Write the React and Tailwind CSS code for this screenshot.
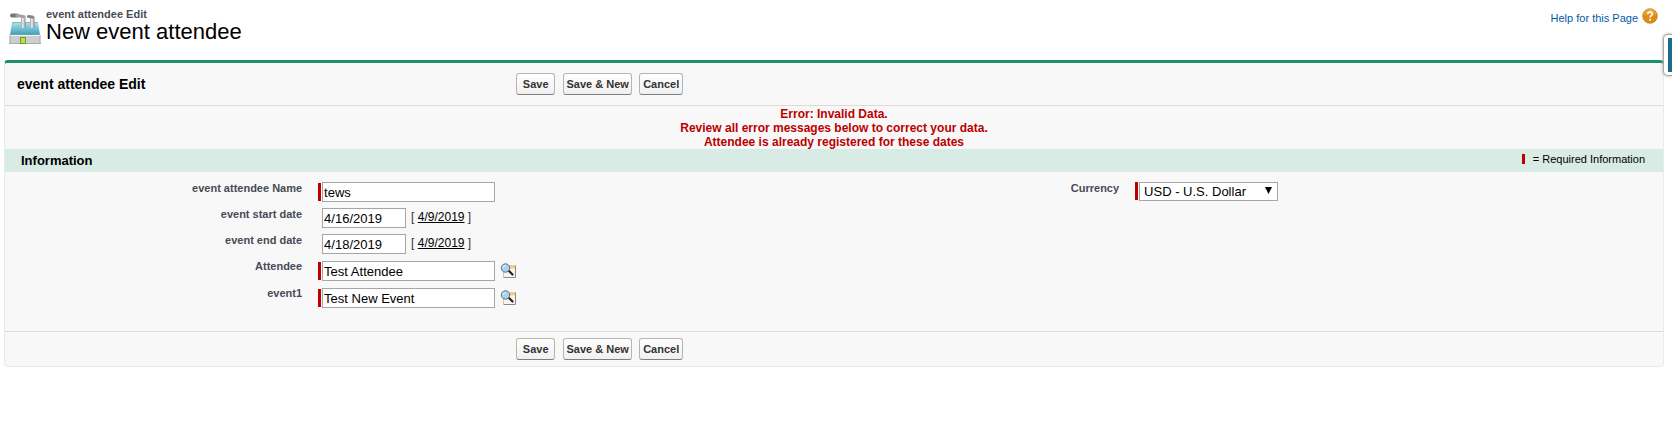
import { useState } from 'react';

const inputClass =
  'h-5 border border-[#a6a6a6] bg-white px-[1px] text-[13px] leading-4 text-black outline-none';

function FactoryIcon() {
  return (
    <svg width="32" height="32" viewBox="0 0 32 32" aria-hidden="true">
      <defs>
        <linearGradient id="roof" x1="0" y1="0" x2="0" y2="1">
          <stop offset="0" stopColor="#b4e2ea" />
          <stop offset="1" stopColor="#3a9fb8" />
        </linearGradient>
        <linearGradient id="chimney" x1="0" y1="0" x2="1" y2="0">
          <stop offset="0" stopColor="#9a9a9a" />
          <stop offset="0.4" stopColor="#f2f2f2" />
          <stop offset="1" stopColor="#868686" />
        </linearGradient>
      </defs>
      <path d="M3 9h26l2 13H1z" fill="url(#roof)" />
      <path d="M3 9.500h26" stroke="#74bfce" />
      <path d="M1 22h30v8.500H1z" fill="#cccecf" stroke="#a0a2a4" />
      <path d="M0 30.500h32" stroke="#a8aaac" />
      <path d="M1 22.500h30" stroke="#eef2f3" />
      <path d="M13 2.500h3.500V15H12V5z" fill="url(#chimney)" />
      <path d="M22 3.500h3.500V15H21V6z" fill="url(#chimney)" />
      <path d="M3 2.500h5" fill="none" stroke="#777" strokeWidth="4" strokeLinecap="round" />
      <path d="M8 2.500l6 1" fill="none" stroke="#a2a2a2" strokeWidth="3" strokeLinecap="round" />
      <path d="M19.500 3.500l4 .5" fill="none" stroke="#858585" strokeWidth="3" strokeLinecap="round" />
      <rect x="11.500" y="24.500" width="5" height="6" fill="#b9e04c" stroke="#6f9a26" />
    </svg>
  );
}

function HelpIcon() {
  return (
    <svg width="16" height="16" viewBox="0 0 16 16" aria-hidden="true">
      <defs>
        <linearGradient id="help" x1="0" y1="0" x2="0" y2="1">
          <stop offset="0" stopColor="#f3b64a" />
          <stop offset="0.5" stopColor="#e08f14" />
          <stop offset="1" stopColor="#d98c18" />
        </linearGradient>
      </defs>
      <circle cx="8" cy="8" r="7.300" fill="url(#help)" stroke="#b8741a" strokeWidth="0.700" />
      <path d="M5.700 6.200C5.700 3.300 10.400 3.500 10.300 6.100 10.200 7.700 8.100 7.700 8.100 9.500" fill="none" stroke="#fff" strokeWidth="1.600" />
      <circle cx="8.100" cy="11.700" r="1" fill="#fff" />
    </svg>
  );
}

function LookupIcon() {
  return (
    <svg width="17" height="16" viewBox="0 0 17 16" aria-hidden="true">
      <path d="M4 2h11v12H4z" fill="#f8f5ee" />
      <path d="M3.500 14.500h12v-12" fill="none" stroke="#8a8a8a" />
      <path d="M3.500 14V9" fill="none" stroke="#c9c5bb" />
      <path d="M9 2h6v3.500H9z" fill="#f2cf7c" />
      <path d="M8.500 7.500l4 4" stroke="#222" strokeWidth="2.200" strokeLinecap="round" />
      <circle cx="5.500" cy="5" r="4.200" fill="#a9d3ec" stroke="#5b6f80" />
      <path d="M3.200 5q0-2.300 2.500-2.500" fill="none" stroke="#e9f6ff" />
    </svg>
  );
}

function ButtonRow() {
  const buttonClass =
    'h-[22px] cursor-pointer rounded-[3px] border border-[#b5b5b5] border-b-[#7f7f7f] bg-linear-to-b from-white to-[#f0f0f0] text-[11px] leading-4 font-bold text-[#333]';

  return (
    <div className="ml-[9px] flex">
      <button type="submit" className={`${buttonClass} w-[39px]`}>Save</button>
      <button type="submit" className={`${buttonClass} ml-2 w-[69px]`}>Save &amp; New</button>
      <button type="button" className={`${buttonClass} ml-[7px] w-11`}>Cancel</button>
    </div>
  );
}

function Field({ id, label, required, children }) {
  return (
    <div className="flex">
      <label htmlFor={id} className="w-[36%] pr-[9px] text-right text-[11px] leading-3 font-bold text-[#4a4a56]">
        {label}
      </label>
      <div className="flex items-end pl-[7px]">
        <span className={required ? 'mr-[1px] mb-[1px] h-[18px] w-[3px] bg-[#b00]' : 'mr-[1px] w-[3px]'} />
        {children}
      </div>
    </div>
  );
}

export default function App() {
  const [formData, setFormData] = useState({
    name: 'tews',
    startDate: '4/16/2019',
    endDate: '4/18/2019',
    attendee: 'Test Attendee',
    event: 'Test New Event',
    currency: 'USD',
  });

  const handleChange = (e) => {
    const { name, value } = e.target;
    setFormData({
      ...formData,
      [name]: value,
    });
  };

  const handleSubmit = (e) => {
    e.preventDefault();
  };

  const renderDate = (name) => (
    <>
      <input id={name} name={name} value={formData[name]} onChange={handleChange} className={`${inputClass} w-[84px]`} />
      <span className="ml-[5px] self-start text-[12px] leading-[18px] text-[#333]">
        [ <a href="#today" className="text-black underline">4/9/2019</a> ]
      </span>
    </>
  );

  const renderLookup = (name, label) => (
    <>
      <input id={name} name={name} value={formData[name]} onChange={handleChange} className={`${inputClass} w-[173px]`} />
      <button type="button" aria-label={`${label} Lookup`} className="ml-[5px] h-[21px] cursor-pointer">
        <LookupIcon />
      </button>
    </>
  );

  return (
    <div className="overflow-x-hidden bg-white font-['Liberation_Sans',Arial,sans-serif] text-black">
      <header className="flex h-[60px] items-start justify-between pr-[14px] pl-[9px]">
        <div className="flex">
          <div className="mt-[13px]">
            <FactoryIcon />
          </div>
          <div className="mt-2 ml-[5px]">
            <p className="text-[11px] leading-3 font-bold text-[#4a4a56]">event attendee Edit</p>
            <h1 className="text-[22px] leading-6">New event attendee</h1>
          </div>
        </div>
        <a href="#help" className="mt-2 flex text-[11px] text-[#015ba7]">
          <span className="mt-[2px] mr-1 leading-4">Help for this Page</span>
          <HelpIcon />
        </a>
      </header>

      <form
        onSubmit={handleSubmit}
        className="mr-2 ml-1 rounded-[4px] border border-t-[3px] border-[#eaeaea] border-t-[#1a9264] bg-[#f8f8f8]"
      >
        <div className="flex h-[43px] items-center border-b border-[#dbdbdb] px-3">
          <h2 className="w-[30%] text-[14px] leading-4 font-bold">event attendee Edit</h2>
          <ButtonRow />
        </div>

        <div className="pt-[1px] text-center text-[12px] leading-[14px] font-bold text-[#b00]">
          <p>Error: Invalid Data.</p>
          <p>Review all error messages below to correct your data.</p>
          <p>Attendee is already registered for these dates</p>
        </div>

        <div className="flex h-[23px] items-center justify-between bg-[#d8ebe4] pr-[18px] pl-4">
          <h3 className="text-[13px] leading-4 font-bold">Information</h3>
          <div className="flex items-center pb-1 text-[11px] leading-4">
            <span className="mr-2 h-[10px] w-[3px] bg-[#b00]" />
            = Required Information
          </div>
        </div>

        <div className="grid grid-cols-2 px-3 pt-[10px] pb-[23px]">
          <div className="flex flex-col gap-[6px]">
            <Field id="name" label="event attendee Name" required>
              <input id="name" name="name" value={formData.name} onChange={handleChange} className={`${inputClass} w-[173px]`} />
            </Field>
            <Field id="startDate" label="event start date">{renderDate('startDate')}</Field>
            <Field id="endDate" label="event end date">{renderDate('endDate')}</Field>
            <Field id="attendee" label="Attendee" required>{renderLookup('attendee', 'Attendee')}</Field>
            <Field id="event" label="event1" required>{renderLookup('event', 'event1')}</Field>
          </div>
          <div>
            <Field id="currency" label="Currency" required>
              <div className="relative">
                <select
                  id="currency"
                  name="currency"
                  value={formData.currency}
                  onChange={handleChange}
                  className="block h-[19px] w-[139px] appearance-none border border-[#a6a6a6] bg-white pl-1 text-[13px] leading-4 outline-none"
                >
                  <option value="USD">USD - U.S. Dollar</option>
                  <option value="EUR">EUR - Euro</option>
                </select>
                <svg width="7" height="7" viewBox="0 0 7 7" className="pointer-events-none absolute top-[5px] right-[6px]" aria-hidden="true">
                  <path d="M0 0h7L3.500 7z" fill="#000" />
                </svg>
              </div>
            </Field>
          </div>
        </div>

        <div className="flex h-[35px] items-center border-t border-[#dbdbdb] px-3">
          <div className="w-[30%]" />
          <ButtonRow />
        </div>
      </form>

      <button
        type="button"
        aria-label="Open sidebar"
        className="absolute top-[34px] right-0 h-[42px] w-[9px] rounded-l-[5px] border border-r-0 border-[#aaa] bg-white py-[3px] pl-1 shadow-[0_0_3px_#999]"
      >
        <span className="block h-full bg-[#1d6c8c]" />
      </button>
    </div>
  );
}
